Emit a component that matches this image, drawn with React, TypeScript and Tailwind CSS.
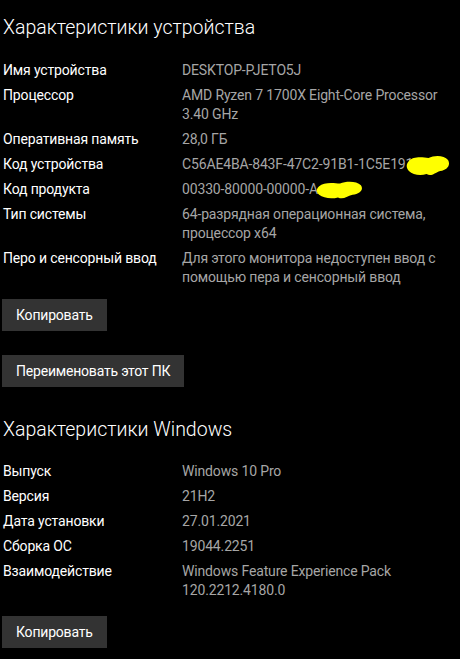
const font = { fontFamily: 'Roboto, "Noto Sans", "Liberation Sans", sans-serif' }

type Row = { label: string; value: React.ReactNode }

function Blob({ className }: { className: string }) {
  return (
    <svg className={className} viewBox="0 0 46 22" preserveAspectRatio="none" fill="#ffff00">
      <path d="M4 6 C8 1 18 2 24 3 C30 0 40 0 44 5 C47 10 43 15 36 16 C30 18 27 22 22 19 C16 21 8 20 4 16 C1 13 1 9 4 6 Z" />
    </svg>
  )
}

const deviceRows: Row[] = [
  { label: 'Имя устройства', value: 'DESKTOP-PJETO5J' },
  { label: 'Процессор', value: <>AMD Ryzen 7 1700X Eight-Core Processor<br />3.40 GHz</> },
  { label: 'Оперативная память', value: '28,0 ГБ' },
  {
    label: 'Код устройства',
    value: (
      <span className="relative">
        C56AE4BA-843F-47C2-91B1-1C5E191
        <Blob className="absolute left-full -ml-[8px] -top-[1px] w-[45px] h-[22px]" />
      </span>
    ),
  },
  {
    label: 'Код продукта',
    value: (
      <span className="relative">
        00330-80000-00000-A
        <Blob className="absolute left-full -ml-[3px] top-0 w-[48px] h-[19px]" />
      </span>
    ),
  },
  { label: 'Тип системы', value: <>64-разрядная операционная система,<br />процессор x64</> },
  { label: 'Перо и сенсорный ввод', value: <>Для этого монитора недоступен ввод с<br />помощью пера и сенсорный ввод</> },
]

const windowsRows: Row[] = [
  { label: 'Выпуск', value: 'Windows 10 Pro' },
  { label: 'Версия', value: '21H2' },
  { label: 'Дата установки', value: '27.01.2021' },
  { label: 'Сборка ОС', value: '19044.2251' },
  { label: 'Взаимодействие', value: <>Windows Feature Experience Pack<br />120.2212.4180.0</> },
]

function InfoTable({ rows }: { rows: Row[] }) {
  return (
    <div className="flex flex-col gap-[6px]">
      {rows.map(r => (
        <div key={r.label} className="flex text-[14px] leading-[19px] tracking-[-0.15px]">
          <div className="w-[179px] shrink-0 text-white">{r.label}</div>
          <div className="text-[#a6a6a6]">{r.value}</div>
        </div>
      ))}
    </div>
  )
}

function Btn({ children }: { children: React.ReactNode }) {
  return (
    <button className="h-[32px] px-[14px] bg-[#333333] text-white text-[14px] leading-none tracking-[-0.2px]">
      {children}
    </button>
  )
}

export default function App() {
  return (
    <div className="w-[460px] h-[659px] bg-black overflow-hidden pl-[3px] pt-[15px]" style={font}>
      {/* Device */}
      <h2 className="text-[19.5px] leading-[26px] font-light text-white">Характеристики устройства</h2>
      <div className="mt-[20px]">
        <InfoTable rows={deviceRows} />
      </div>
      <div className="mt-[12px] -ml-[1px] flex flex-col items-start gap-[24px]">
        <Btn>Копировать</Btn>
        <Btn>Переименовать этот ПК</Btn>
      </div>

      {/* Windows */}
      <h2 className="mt-[30px] text-[19.5px] leading-[26px] font-light text-white">Характеристики Windows</h2>
      <div className="mt-[19px]">
        <InfoTable rows={windowsRows} />
      </div>
      <div className="mt-[16px] -ml-[1px]">
        <Btn>Копировать</Btn>
      </div>
    </div>
  )
}
